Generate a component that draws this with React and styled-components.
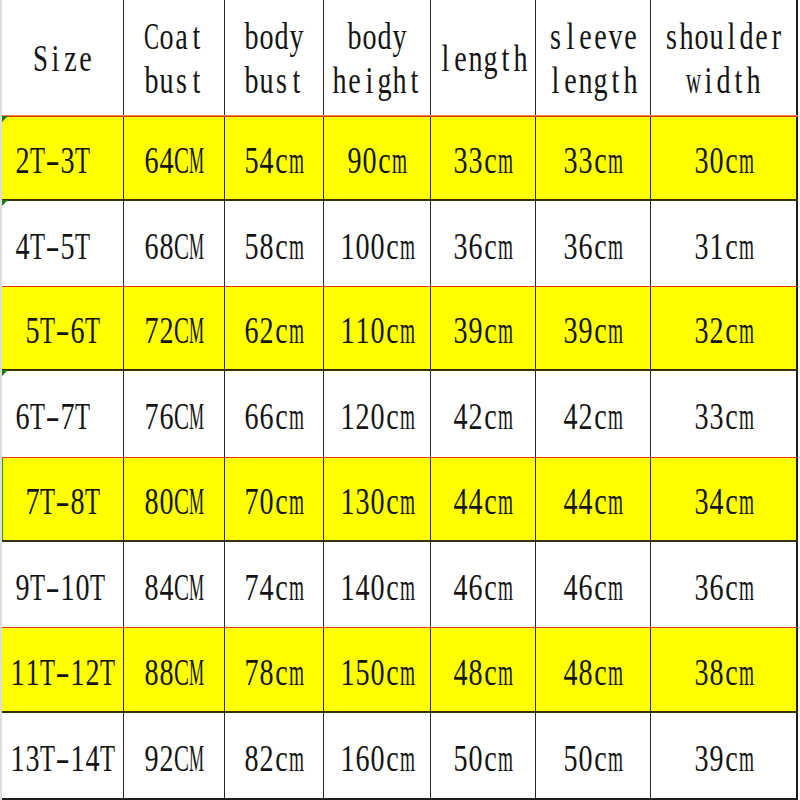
import React from "react";
import styled, { createGlobalStyle, css } from "styled-components";

const GlobalStyle = createGlobalStyle`
  html, body { margin: 0; padding: 0; background: #ffffff; }
  body { width: 800px; height: 800px; overflow: hidden; }
`;

const COLS = "122px 101px 99px 107px 105px 115px 147px";
const FONT_PX = 37;
const PITCH = 15;

// Liberation Serif advance widths (em) used to squeeze each glyph into a
// fixed-pitch cell, imitating the half-width Song-style Latin of the original.
const ADV = {
  "0": 0.5, "1": 0.5, "2": 0.5, "3": 0.5, "4": 0.5, "5": 0.5, "6": 0.5, "7": 0.5, "8": 0.5, "9": 0.5,
  T: 0.611, C: 0.667, M: 0.889, S: 0.556,
  a: 0.444, b: 0.5, c: 0.444, d: 0.5, e: 0.444, g: 0.5, h: 0.5, i: 0.278, l: 0.278,
  m: 0.778, n: 0.5, o: 0.5, r: 0.333, s: 0.389, t: 0.278, u: 0.5, v: 0.5, w: 0.722,
  y: 0.5, z: 0.444,
};

const squeeze = (ch) => {
  if (ch === "-") return "1.150";
  const adv = (ADV[ch] || 0.5) * FONT_PX;
  return Math.min(0.76, PITCH / adv).toFixed(3);
};

const Sheet = styled.div`
  box-sizing: border-box;
  width: 798px;
  border-left: 2px solid #dedede;
  display: flex;
  flex-direction: column;
`;

const Row = styled.div`
  position: relative;
  box-sizing: border-box;
  display: grid;
  grid-template-columns: ${COLS};
  height: ${(p) => p.$h}px;
  background: ${(p) => (p.$hl ? "#ffff00" : "#ffffff")};
  ${(p) =>
    p.$hl &&
    css`
      border-top: 1px solid #e2381f;
      border-bottom: 2px solid #34340c;
    `}
  ${(p) =>
    p.$last &&
    css`
      border-bottom: 3px solid #1e1e1e;
    `}
  ${(p) =>
    p.$green &&
    css`
      box-shadow: inset 1px 0 0 #3c8f2a;
    `}
`;

const HeaderRow = styled(Row)`
  border-bottom: 1px solid #f07a4a;
`;

const Flag = styled.span`
  position: absolute;
  left: 0;
  top: -1px;
  width: 0;
  height: 0;
  border-top: 6px solid #1f7a1f;
  border-right: 6px solid transparent;
`;

const Cell = styled.div`
  box-sizing: border-box;
  display: flex;
  flex-direction: column;
  justify-content: center;
  align-items: ${(p) => (p.$left ? "flex-start" : "center")};
  padding-left: ${(p) => (p.$left ? "13px" : "0")};
  padding-top: ${(p) => (p.$head ? "2px" : "6px")};
  border-right: ${(p) => (p.$end ? "2px solid #1e1e1e" : "1px solid #2a2a2a")};
  overflow: visible;
`;

const Line = styled.div`
  display: flex;
  height: ${(p) => (p.$head ? "44px" : "48px")};
  line-height: ${(p) => (p.$head ? "44px" : "48px")};
  font-family: "Liberation Serif", "Times New Roman", serif;
  font-size: ${FONT_PX}px;
  color: #141414;
  white-space: nowrap;
`;

const Glyph = styled.span`
  display: inline-flex;
  justify-content: center;
  width: ${PITCH}px;
  transform: scaleX(${(p) => p.$sx});
`;

function MonoText({ text, head }) {
  return (
    <Line $head={head}>
      {Array.from(text).map((ch, i) => (
        <Glyph key={i} $sx={squeeze(ch)}>
          {ch}
        </Glyph>
      ))}
    </Line>
  );
}

const headers = [
  ["Size"],
  ["Coat", "bust"],
  ["body", "bust"],
  ["body", "height"],
  ["length"],
  ["sleeve", "length"],
  ["shoulder", "width"],
];

const rows = [
  { size: "2T-3T", left: true, hl: true, flag: true, v: ["64CM", "54cm", "90cm", "33cm", "33cm", "30cm"] },
  { size: "4T-5T", left: true, flag: true, v: ["68CM", "58cm", "100cm", "36cm", "36cm", "31cm"] },
  { size: "5T-6T", hl: true, v: ["72CM", "62cm", "110cm", "39cm", "39cm", "32cm"] },
  { size: "6T-7T", left: true, flag: true, v: ["76CM", "66cm", "120cm", "42cm", "42cm", "33cm"] },
  { size: "7T-8T", hl: true, green: true, v: ["80CM", "70cm", "130cm", "44cm", "44cm", "34cm"] },
  { size: "9T-10T", left: true, v: ["84CM", "74cm", "140cm", "46cm", "46cm", "36cm"] },
  { size: "11T-12T", hl: true, v: ["88CM", "78cm", "150cm", "48cm", "48cm", "38cm"] },
  { size: "13T-14T", v: ["92CM", "82cm", "160cm", "50cm", "50cm", "39cm"] },
];

const heights = [85, 85, 85, 86, 85, 85, 86, 88];

export default function App() {
  return (
    <>
      <GlobalStyle />
      <Sheet>
        <HeaderRow $h={116}>
          {headers.map((lines, i) => (
            <Cell key={i} $head $end={i === headers.length - 1}>
              {lines.map((l, j) => (
                <MonoText key={j} text={l} head />
              ))}
            </Cell>
          ))}
        </HeaderRow>
        {rows.map((r, i) => (
          <Row
            key={r.size}
            $h={heights[i]}
            $hl={r.hl}
            $green={r.green}
            $last={i === rows.length - 1}
          >
            {r.flag && <Flag />}
            <Cell $left={r.left}>
              <MonoText text={r.size} />
            </Cell>
            {r.v.map((val, j) => (
              <Cell key={j} $end={j === r.v.length - 1}>
                <MonoText text={val} />
              </Cell>
            ))}
          </Row>
        ))}
      </Sheet>
    </>
  );
}
